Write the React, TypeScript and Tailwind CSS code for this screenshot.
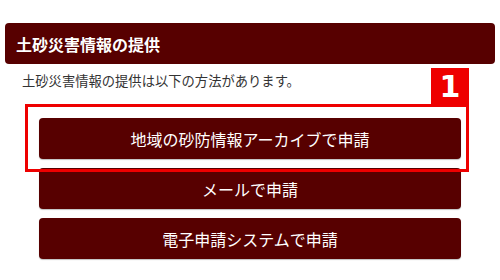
const buttons = ['地域の砂防情報アーカイブで申請', 'メールで申請', '電子申請システムで申請'];

export default function App() {
  return (
    <div className="relative w-[500px] h-[280px] bg-white pt-[23px] font-['Noto_Sans_CJK_JP','Noto_Sans',sans-serif]">
      {/* Section heading */}
      <h2 className="mx-[5px] h-[41px] rounded-[4px] bg-[#570000] flex items-center pl-[11px] text-white font-bold text-[16px] leading-none">
        土砂災害情報の提供
      </h2>

      <p className="mt-[9px] pl-[22px] text-[13.3px] leading-[16px] text-[#333]">
        土砂災害情報の提供は以下の方法があります。
      </p>

      <div className="mt-[29px] flex flex-col gap-[9px] px-[39px]">
        {buttons.map((label) => (
          <a
            key={label}
            href="#"
            className="h-[41px] rounded-[4px] bg-[#570000] flex items-center justify-center text-white text-[16px] leading-none shadow-[0_1px_1px_rgba(0,0,0,0.25)]"
          >
            {label}
          </a>
        ))}
      </div>

      {/* Annotation overlay */}
      <div className="absolute left-[25px] top-[104px] w-[444px] h-[68px] border-[3px] border-[#ee0000]" />
      <div className="absolute left-[431px] top-[68px] w-[38px] h-[37px] bg-[#ee0000] flex items-center justify-center text-white font-bold text-[30px] leading-none font-['DejaVu_Sans',sans-serif]">
        1
      </div>
    </div>
  );
}
